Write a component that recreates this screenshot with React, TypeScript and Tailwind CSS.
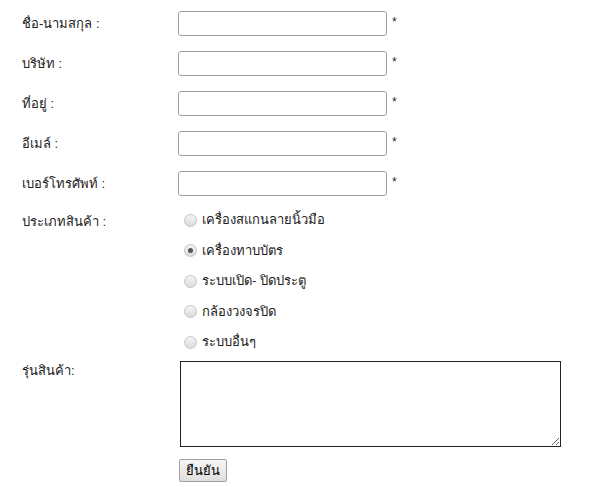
import { useState } from 'react'

const fields = ['ชื่อ-นามสกุล :', 'บริษัท :', 'ที่อยู่ :', 'อีเมล์ :', 'เบอร์โทรศัพท์ :']

const products = [
  'เครื่องสแกนลายนิ้วมือ',
  'เครื่องทาบบัตร',
  'ระบบเปิด- ปิดประตู',
  'กล้องวงจรปิด',
  'ระบบอื่นๆ',
]

export default function App() {
  const [selected, setSelected] = useState(1)

  return (
    <div className="min-h-[487px] bg-white text-[13px] text-[#222] font-['Tahoma','Liberation_Sans','DejaVu_Sans',sans-serif]">
      <div className="pl-[22px] pt-[11px]">
        <div className="flex flex-col gap-[15px]">
          {fields.map((label) => (
            <div key={label} className="flex items-center h-[25px]">
              <span className="w-[156px]">{label}</span>
              <input
                type="text"
                className="w-[209px] h-[25px] border border-[#a0a0a0] rounded-[3px] bg-white outline-none"
              />
              <span className="ml-[5px] text-[12px] -mt-[3px]">*</span>
            </div>
          ))}
        </div>

        <div className="flex mt-[14px]">
          <span className="w-[156px] pt-[2px]">ประเภทสินค้า :</span>
          <div className="flex flex-col gap-[10.5px] pl-[6px]">
            {products.map((p, i) => (
              <label key={p} className="flex items-center h-[20px] cursor-pointer" onClick={() => setSelected(i)}>
                <span className="w-[13px] h-[13px] rounded-full border border-[#c4c4c4] bg-gradient-to-b from-[#f4f4f4] to-[#dcdcdc] flex items-center justify-center">
                  {selected === i && <span className="w-[5px] h-[5px] rounded-full bg-[#555]" />}
                </span>
                <span className="ml-[5px]">{p}</span>
              </label>
            ))}
          </div>
        </div>

        <div className="flex mt-[9px]">
          <span className="w-[158px] pt-[0px]">รุ่นสินค้า:</span>
          <textarea className="w-[381px] h-[86px] border border-[#222] bg-white outline-none resize" />
        </div>

        <div className="pl-[157px] mt-[12px]">
          <button className="h-[23px] px-[6px] border border-[#a0a0a0] rounded-[2px] bg-gradient-to-b from-[#f6f6f6] to-[#dedede] text-[13px] text-black">
            ยืนยัน
          </button>
        </div>
      </div>
    </div>
  )
}
